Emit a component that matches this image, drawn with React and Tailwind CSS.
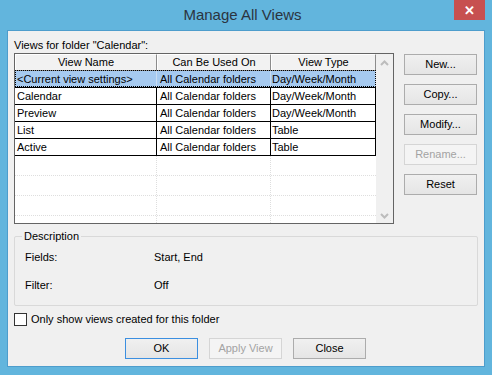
import React from 'react';

const rows = [
    ['<Current view settings>', 'All Calendar folders', 'Day/Week/Month'],
    ['Calendar', 'All Calendar folders', 'Day/Week/Month'],
    ['Preview', 'All Calendar folders', 'Day/Week/Month'],
    ['List', 'All Calendar folders', 'Table'],
    ['Active', 'All Calendar folders', 'Table'],
];

const colW = ['w-[142px]', 'w-[114px]', 'w-[105px]'];

const Button = ({ children, disabled, primary, className = '' }) => (
    <div
        className={`h-[21px] w-[73px] flex items-center justify-center border text-[11px] leading-none ${
            disabled
                ? 'border-[#d5d5d5] bg-[#f4f4f4] text-[#a3a3a3]'
                : primary
                ? 'border-[#3c8fe0] bg-gradient-to-b from-[#f0f0f0] to-[#e5e5e5] text-black'
                : 'border-[#acacac] bg-gradient-to-b from-[#f0f0f0] to-[#e5e5e5] text-black'
        } ${className}`}
    >
        {children}
    </div>
);

const Chevron = ({ up }) => (
    <svg width="9" height="6" viewBox="0 0 9 6">
        <path d={up ? 'M1 5 L4.5 1.5 L8 5' : 'M1 1 L4.5 4.5 L8 1'} fill="none" stroke="#bcbcbc" strokeWidth="2" />
    </svg>
);

export default function App() {
    return (
        <div className="w-[492px] h-[375px] bg-[#62b5dd] flex flex-col font-['Liberation_Sans',Arial,sans-serif] text-black overflow-hidden">
            {/* Title bar */}
            <div className="h-[30px] flex items-start shrink-0">
                <div className="flex-1 h-[30px] flex items-center justify-center pl-[31px] text-[15px] text-[#2b3440]">
                    Manage All Views
                </div>
                <div className="w-[31px] h-[20px] mr-[7px] bg-[#c75050] flex items-center justify-center text-white text-[13px] font-bold leading-none">
                    ✕
                </div>
            </div>

            {/* Client area */}
            <div className="mx-[7px] h-[337px] border border-[#4d9dcc] bg-[#f0f0f0] pl-[6px] pr-[6px] text-[11px]">
                <div className="h-[22px] pt-[7px] leading-[14px]">Views for folder "Calendar":</div>

                <div className="flex gap-[10px]">
                    {/* List view */}
                    <div className="w-[380px] h-[171px] border border-[#646464] bg-white flex overflow-hidden">
                        <div className="w-[361px] flex flex-col">
                            <div className="h-[17px] flex shrink-0">
                                {['View Name', 'Can Be Used On', 'View Type'].map((h, i) => (
                                    <div
                                        key={h}
                                        className={`${colW[i]} h-[17px] bg-[#f2f2f2] border-t border-l border-t-white border-l-white border-r border-b border-r-[#8c8c8c] border-b-[#8c8c8c] flex items-center justify-center leading-none`}
                                    >
                                        {h}
                                    </div>
                                ))}
                            </div>
                            {rows.map((r, ri) => (
                                <div key={ri} className={`relative h-[17px] flex shrink-0 border-b border-black ${ri === 0 ? 'bg-[#a6caf0]' : ''}`}>
                                    {r.map((c, ci) => (
                                        <div
                                            key={ci}
                                            className={`${colW[ci]} h-full flex items-center border-r ${ri === 0 ? 'border-[#c9dcf2]' : 'border-black'} ${ci === 0 ? 'pl-[2px]' : ci === 1 ? 'pl-[3px]' : 'pl-[1px]'} leading-none whitespace-nowrap overflow-hidden`}
                                        >
                                            {c}
                                        </div>
                                    ))}
                                    {ri === 0 && <span className="absolute inset-0 -top-px border border-dotted border-black pointer-events-none" />}
                                </div>
                            ))}
                            {[0, 1, 2, 3].map(i => (
                                <div key={i} className={`${i === 3 ? 'h-[7px]' : 'h-[20px] border-b border-dotted border-[#dedede]'} flex shrink-0`}>
                                    {[0, 1, 2].map(ci => (
                                        <div key={ci} className={`${colW[ci]} h-full ${ci < 2 ? 'border-r border-dotted border-[#dedede]' : ''}`} />
                                    ))}
                                </div>
                            ))}
                        </div>
                        {/* Scrollbar */}
                        <div className="w-[17px] bg-[#f0f0f0] flex flex-col items-center justify-between pt-[6px] pb-[4px]">
                            <Chevron up />
                            <Chevron />
                        </div>
                    </div>

                    {/* Side buttons */}
                    <div className="flex flex-col gap-[9px] pt-[1px]">
                        <Button>New...</Button>
                        <Button>Copy...</Button>
                        <Button>Modify...</Button>
                        <Button disabled>Rename...</Button>
                        <Button>Reset</Button>
                    </div>
                </div>

                {/* Description group */}
                <div className="relative mt-[12px] w-[464px] h-[70px] border border-[#d9d9d9] rounded-[2px]">
                    <span className="absolute -top-[8px] left-[7px] px-[2px] bg-[#f0f0f0] leading-[14px]">Description</span>
                    <div className="pl-[10px] pt-[13px] flex flex-col gap-[14px] leading-[14px]">
                        <div className="flex">
                            <span className="w-[129px]">Fields:</span>
                            <span>Start, End</span>
                        </div>
                        <div className="flex">
                            <span className="w-[129px]">Filter:</span>
                            <span>Off</span>
                        </div>
                    </div>
                </div>

                {/* Checkbox */}
                <div className="mt-[6px] flex items-center gap-[4px] h-[14px]">
                    <div className="w-[13px] h-[13px] border border-[#333333] bg-white" />
                    <span className="leading-[14px]">Only show views created for this folder</span>
                </div>

                {/* Bottom buttons */}
                <div className="mt-[12px] flex gap-[11px] pl-[111px]">
                    <Button primary>OK</Button>
                    <Button disabled>Apply View</Button>
                    <Button>Close</Button>
                </div>
            </div>
        </div>
    );
}
